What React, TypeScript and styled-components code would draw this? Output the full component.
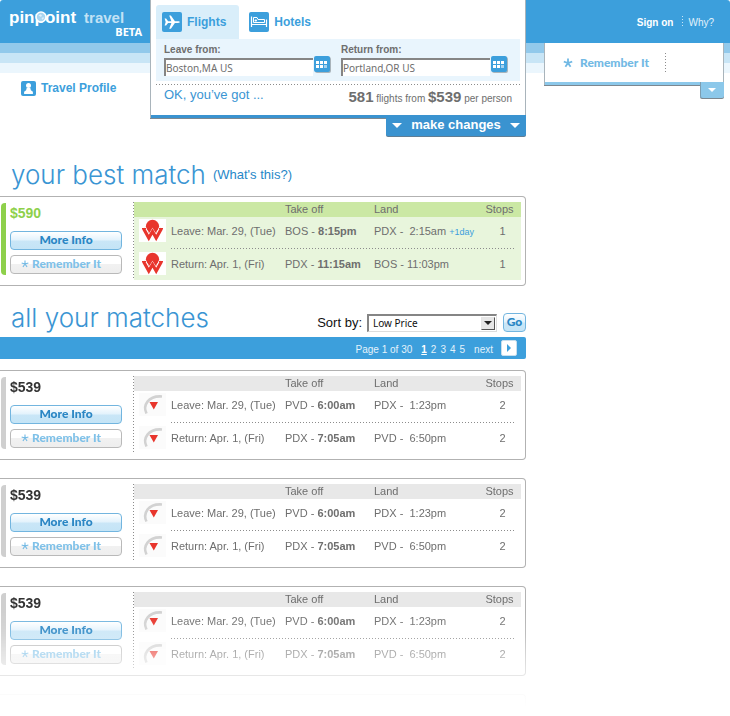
import React from "react";
import styled, { createGlobalStyle } from "styled-components";

const BLUE = "#3c9fdc";
const TEXT = "#6e6e6e";
const SANS = '"Liberation Sans", Arial, sans-serif';
const HUMANIST = 'Lato, "Noto Sans", sans-serif';

const GlobalStyle = createGlobalStyle`
  *, *::before, *::after { box-sizing: border-box; }
  body {
    margin: 0;
    background: #fff;
    color: ${TEXT};
    font: 11px/14px ${SANS};
  }
  button, input, select { font: inherit; color: inherit; margin: 0; }
  button { cursor: pointer; }
  a { text-decoration: none; }
`;

const Columns = styled.div`
  display: grid;
  grid-template-columns: minmax(0, 1fr) 204px;
`;

const Header = styled.header`
  display: grid;
  grid-template-columns: 150px minmax(0, 1fr) 204px;
  align-items: start;
  border-radius: 3px 3px 0 0;
  background: linear-gradient(
    ${BLUE} 0 43px, #92c9eb 43px 53px, #c8e5f6 53px 63px, #ebf6fd 63px 73px, transparent 73px
  );
`;

const Dots = styled.div<{ $vertical?: boolean }>`
  flex: none;
  width: ${(p) => (p.$vertical ? "1px" : "auto")};
  height: ${(p) => (p.$vertical ? "auto" : "1px")};
  background: repeating-linear-gradient(
    ${(p) => (p.$vertical ? "180deg" : "90deg")}, #8c8c8c 0 1px, transparent 1px 3px
  );
`;

/* ---------- brand ---------- */
const Brand = styled.div`
  display: flex;
  flex-direction: column;
`;
const Logo = styled.a`
  display: flex;
  align-items: baseline;
  gap: 8px;
  padding: 9px 0 0 9px;
  color: #fff;
  font-size: 17px;
  line-height: 18px;
  font-weight: 700;
`;
const BubbleLetter = styled.span`
  position: relative;
  svg { position: absolute; left: 0; top: 3px; }
`;
const LogoSub = styled.span`
  color: #c2e2f5;
  font-size: 15px;
`;
const Beta = styled.span`
  align-self: flex-end;
  padding-right: 8px;
  color: #fff;
  font: 700 11px/10px "Noto Sans", sans-serif;
`;
const ProfileLink = styled.a`
  display: flex;
  align-items: center;
  gap: 5px;
  margin: 43px 0 0 21px;
  color: ${BLUE};
  font-size: 12px;
  line-height: 16px;
  font-weight: 700;
`;

/* ---------- search panel ---------- */
const SearchColumn = styled.div`
  display: flex;
  flex-direction: column;
`;
const SearchPanel = styled.form`
  padding: 5px 5px 3px;
  background: #fff;
  border: solid #a9b4bb;
  border-width: 0 1px;
  box-shadow: inset 0 -3px 0 #3a93d0, 0 1px 0 #7d8890;
`;
const Tabs = styled.nav`
  display: flex;
`;
const Tab = styled.button<{ $active?: boolean }>`
  display: flex;
  align-items: center;
  gap: 5px;
  height: 34px;
  padding: 0 13px 0 6px;
  border: 0;
  border-radius: 3px 3px 0 0;
  background: ${(p) => (p.$active ? "#d9eefa" : "transparent")};
  color: ${BLUE};
  font-size: 12px;
  font-weight: 700;
  margin-right: 4px;
`;
const Fields = styled.div`
  display: flex;
  gap: 11px;
  height: 42px;
  padding: 4px 13px 0 8px;
  margin-bottom: 3px;
  background: #e9f5fd;
`;
const Field = styled.div`
  flex: 1;
  min-width: 0;
  label {
    display: block;
    font-size: 10px;
    line-height: 13px;
    font-weight: 700;
  }
`;
const FieldRow = styled.div`
  display: flex;
  gap: 1px;
`;
const TextInput = styled.input`
  flex: 1;
  min-width: 0;
  height: 18px;
  margin-top: 2px;
  padding: 0;
  border: solid #858585;
  border-width: 2px 0 0 2px;
  background: #fff;
  font: 10px/14px "Noto Sans", sans-serif;
`;
const CalendarButton = styled.button`
  display: block;
  width: 16px;
  height: 16px;
  padding: 0;
  border: 0;
  border-radius: 2px;
  background: ${BLUE};
  box-shadow: 1px 1px 0 #a9b4bb;
  svg { display: block; }
`;
const Summary = styled.div`
  display: flex;
  justify-content: space-between;
  height: 30px;
  padding: 2px 8px 0;
`;
const Greeting = styled.span`
  color: #3a95d3;
  font-size: 13px;
  line-height: 16px;
`;
const Totals = styled.span`
  font-size: 10px;
  line-height: 20px;
  strong { font-size: 15px; }
`;
const ChangesButton = styled.button`
  display: flex;
  align-items: center;
  justify-content: space-between;
  align-self: flex-end;
  width: 140px;
  height: 21px;
  margin-top: -3px;
  margin-bottom: 1px;
  padding: 0 6px 1px;
  border: 0;
  border-radius: 0 0 2px 2px;
  background: #3a93d0;
  box-shadow: 0 1px 0 #5f7e95;
  color: #fff;
  font-size: 13px;
  line-height: 16px;
  font-weight: 700;
`;

/* ---------- account ---------- */
const Account = styled.div`
  display: flex;
  flex-direction: column;
`;
const AccountLinks = styled.nav`
  display: flex;
  justify-content: flex-end;
  gap: 5px;
  height: 43px;
  padding: 16px 16px 0 0;
  font-size: 10px;
  a { color: #fff; }
  a:first-child { font-weight: 700; margin-right: 4px; }
  a:last-child { color: #e3f2fb; }
`;
const LightDots = styled.span`
  width: 1px;
  height: 11px;
  background: repeating-linear-gradient(180deg, #c8e5f6 0 1px, transparent 1px 3px);
`;
const Tray = styled.div`
  display: flex;
  height: 42px;
  margin: 0 6px 0 18px;
  padding: 10px 0 0 18px;
  border: 1px solid #a9b4bb;
  border-width: 0 1px;
  background: #fff;
  box-shadow: inset 0 -3px 0 #8cc8ea, 0 1px 0 #7d8890;
`;
const TrayLink = styled.a`
  display: flex;
  align-items: center;
  gap: 7px;
  height: 20px;
  margin-right: 16px;
  color: #72b9e4;
  font: 900 12px/14px ${HUMANIST};
`;
const TrayDots = styled(Dots)`
  height: 19px;
`;
const TrayButton = styled.button`
  display: flex;
  align-items: center;
  justify-content: center;
  align-self: flex-end;
  width: 24px;
  height: 16px;
  margin: -3px 6px 0 0;
  padding: 0;
  border: 0;
  border-radius: 0 0 2px 2px;
  background: #8cc8ea;
  box-shadow: inset 1px 0 0 #7d9db0, 0 1px 0 #7d8890;
`;

/* ---------- results ---------- */
const SectionHead = styled.div<{ $top: number; $bottom: number }>`
  display: flex;
  align-items: center;
  gap: 7px;
  padding: ${(p) => p.$top}px 0 ${(p) => p.$bottom}px 11px;
`;
const Title = styled.h1`
  margin: 0;
  color: #3a95d3;
  font: 300 26px/32px Inter, ${SANS};
`;
const HelpLink = styled.a`
  color: #2787c8;
  font-size: 13px;
`;
const SortForm = styled.form`
  display: flex;
  align-items: center;
  margin-left: auto;
  padding-top: 9px;
  color: #111;
  label { font-size: 13px; margin-right: 5px; }
`;
const SelectBox = styled.div`
  position: relative;
  width: 130px;
  height: 18px;
  margin-right: 6px;
  select {
    appearance: none;
    width: 100%;
    height: 18px;
    padding: 0 0 0 4px;
    border: solid #858585;
    border-width: 2px 1px 1px 2px;
    border-color: #858585 #ddd #ddd #858585;
    border-radius: 0;
    background: #fff;
    font: 10px/14px "Noto Sans", sans-serif;
  }
`;
const SelectArrow = styled.span`
  position: absolute;
  right: 2px;
  top: 3px;
  display: grid;
  place-items: center;
  width: 14px;
  height: 13px;
  border: 1px solid #e4e4e4;
  border-color: #e4e4e4 #555 #555 #e4e4e4;
  background: #e6e6e6;
  pointer-events: none;
`;
const PillButton = styled.button<{ $muted?: boolean }>`
  display: flex;
  align-items: center;
  justify-content: center;
  gap: 3px;
  width: 100%;
  height: 19px;
  padding: ${(p) => (p.$muted ? "0 10px 1px 0" : "0 0 1px")};
  border: 1px solid ${(p) => (p.$muted ? "#b9b9b9" : "#72b5df")};
  border-radius: 4px;
  background: ${(p) =>
    p.$muted
      ? "linear-gradient(#fff 0 45%, #f1f1f1 50%, #eee)"
      : "linear-gradient(#fff, #e4f3fc 45%, #c9e6f7 55%, #c4e4f6)"};
  color: ${(p) => (p.$muted ? "#7fc1e8" : "#2a86c4")};
  font: 900 12px/16px ${HUMANIST};
`;
const GoButton = styled(PillButton)`
  width: 23px;
`;
const Pager = styled.nav`
  display: flex;
  align-items: flex-end;
  justify-content: flex-end;
  height: 22px;
  padding: 0 9px 3px 0;
  border-radius: 0 2px 2px 0;
  background: ${BLUE};
  color: #e3f2fb;
  font-size: 10px;
  line-height: 12px;
  a { color: inherit; }
  a[aria-current] { color: #fff; font-weight: 700; text-decoration: underline; }
`;
const Pages = styled.span`
  display: flex;
  gap: 4px;
  margin: 0 9px;
`;
const NextButton = styled.button`
  display: grid;
  place-items: center;
  width: 16px;
  height: 16px;
  margin: 0 0 0 8px;
  padding: 0;
  border: 1px solid #c8dfee;
  border-radius: 2px;
  background: #fff;
`;
const Card = styled.article`
  display: grid;
  grid-template-columns: 133px 1px minmax(0, 1fr);
  padding: 5px 4px 5px 0;
  border: 1px solid #b2b2b2;
  border-left: 0;
  border-radius: 0 4px 4px 0;
`;
const Offer = styled.div`
  display: flex;
  gap: 4px;
  padding: 1px 11px 0 1px;
`;
const Stripe = styled.span<{ $best?: boolean }>`
  flex: none;
  width: 5px;
  height: 72px;
  border-radius: 4px 0 0 4px;
  background: ${(p) => (p.$best ? "#8ed04b" : "#cfcfcf")};
`;
const OfferBody = styled.div`
  flex: 1;
  display: flex;
  flex-direction: column;
  gap: 5px;
`;
const Price = styled.strong<{ $best?: boolean }>`
  padding: 2px 0 5px;
  color: ${(p) => (p.$best ? "#8ed04b" : "#333")};
  font-size: 14px;
  line-height: 16px;
`;
const Itinerary = styled.table<{ $best?: boolean }>`
  width: 100%;
  table-layout: fixed;
  border-collapse: collapse;
  background: ${(p) => (p.$best ? "#e8f5dc" : "#fff")};
  th, td { padding: 0; text-align: left; font-weight: 400; white-space: nowrap; }
  thead tr { height: 15px; background: ${(p) => (p.$best ? "#cbe8a4" : "#e8e8e8")}; }
  th { line-height: 15px; }
  th:last-child, td.stops { text-align: center; }
  tr.leg { height: 29px; }
  tr.leg:last-child { height: 30px; }
  tr.leg td { padding-top: 7px; vertical-align: top; }
  tr.leg td.airline { padding: 2px 0 0 5px; }
  tr.leg td.stops { padding-left: 6px; }
  tr.divider { height: 4px; }
  tr.divider td { vertical-align: top; }
  td > svg { display: block; }
  small { color: ${BLUE}; font-size: 9px; line-height: 1; }
`;
const LegDots = styled(Dots)`
  margin: 2px 6px 0 37px;
`;
const CardList = styled.div`
  display: flex;
  flex-direction: column;
  gap: 18px;
  margin-top: 11px;
  mask-image: linear-gradient(
    to top, transparent 0, rgba(0, 0, 0, 0.05) 14px, rgba(0, 0, 0, 0.3) 32px,
    rgba(0, 0, 0, 0.55) 54px, rgba(0, 0, 0, 0.85) 74px, #000 96px
  );
`;
const NextCardEdge = styled.div`
  height: 14px;
  border: 1px solid #b2b2b2;
  border-width: 1px 1px 0 0;
  border-radius: 0 4px 0 0;
`;

/* ---------- drawings ---------- */
const Caret = ({ color = "#fff", w = 10, h = 5 }: { color?: string; w?: number; h?: number }) => (
  <svg width={w} height={h} viewBox="0 0 10 5" preserveAspectRatio="none" aria-hidden>
    <path d="M0 0h10L5 5z" fill={color} />
  </svg>
);

const PlaneIcon = () => (
  <svg width="20" height="20" viewBox="0 0 20 20" aria-hidden>
    <rect width="20" height="20" rx="2" fill={BLUE} />
    <path
      d="M2.6 6.6h1.5l2 2.6h3.3L7.2 3.4h1.700l4 5.800h3.200c1 0 1.700.4 1.700.9s-.7.9-1.700.9h-3.200l-4 5.700H7.200L9.400 11H6.100l-2 2.600H2.600L3.700 10z"
      fill="#fff"
    />
  </svg>
);

const BedIcon = () => (
  <svg width="20" height="20" viewBox="0 0 20 20" aria-hidden>
    <rect width="20" height="20" rx="2" fill={BLUE} />
    <path d="M2.5 4.500v10.500M17.500 7.500v7.500M2.500 12.500h15" stroke="#fff" strokeWidth="1.200" fill="none" />
    <path d="M4.500 10.500v-5h3.500l1 2h6.500v3z" fill="none" stroke="#fff" />
    <rect x="5.500" y="7.500" width="2.500" height="2" rx="1" fill="#fff" />
  </svg>
);

const ProfileIcon = () => (
  <svg width="15" height="15" viewBox="0 0 15 15" aria-hidden>
    <rect width="15" height="15" rx="2" fill={BLUE} />
    <circle cx="7.500" cy="4.600" r="2.500" fill="#fff" />
    <path d="M5.700 7h3.600l.6 2.200 2 1.500V13H3.100v-2.300l2-1.500z" fill="#fff" />
  </svg>
);

const CalendarIcon = () => (
  <svg width="16" height="16" viewBox="0 0 16 16" aria-hidden>
    <path d="M2 5h3v3H2zM6 5h3v3H6zM10 5h3v3h-3zM2 9h3v3H2zM6 9h3v3H6z" fill="#fff" />
    <path d="M10 9h3v3h-3z" fill="#a5d2ef" />
  </svg>
);

const Star = ({ size = 10, weight = 1.8 }: { size?: number; weight?: number }) => (
  <svg width={size} height={size} viewBox="0 0 10 10" aria-hidden>
    <path
      d="M5 5V.6M5 5l4.200-1.300M5 5l2.600 3.700M5 5L2.400 8.700M5 5L.8 3.700"
      stroke="#72b9e4"
      strokeWidth={weight}
    />
  </svg>
);

const Bubble = () => (
  <svg width="12" height="12" viewBox="0 0 12 12" aria-hidden>
    <circle cx="6" cy="6" r="5" fill="#a9d5f0" stroke="#fff" strokeWidth="1.600" />
    <path d="M3.500 4.500l2-1.200 1.500 1-1 1.700zM6.500 7l2-1 .3 1.500-1.500 1.300z" fill="#dceffa" />
  </svg>
);

const WingLogo = () => (
  <svg width="27" height="23" viewBox="0 0 27 23" role="img" aria-label="Airline">
    <rect width="27" height="23" fill="#fff" />
    <circle cx="13.500" cy="7.300" r="6.600" fill="#e8352c" />
    <path d="M4.500 9.500l5.300 9.500 3.700-6.500 3.700 6.500 5.300-9.500" fill="none" stroke="#fff" strokeWidth="5.200" />
    <path d="M4.500 9.500l5.300 9.500 3.700-6.500 3.700 6.500 5.300-9.500" fill="none" stroke="#e8352c" strokeWidth="3.200" />
    <path d="M3 9.500h4M20 9.500h4" stroke="#e8352c" strokeWidth="1.200" />
    <path d="M9.800 13.500l3.700-6.200 3.700 6.200" fill="none" stroke="#e8352c" strokeWidth="1.400" />
  </svg>
);

const ArcLogo = () => (
  <svg width="27" height="23" viewBox="0 0 27 23" role="img" aria-label="Airline">
    <rect width="27" height="23" fill="#fbfbfb" />
    <path d="M7.500 20.500C3.500 12.500 9 2.500 23 3.500" fill="none" stroke="#d2d2d2" strokeWidth="2.600" />
    <path d="M10.500 9h8.500l-4.200 7.500z" fill="#e8352c" />
  </svg>
);

/* ---------- data ---------- */
type Leg = { when: string; from: string; off: string; to: string; land: string; plus?: string; stops: number };
type Flight = { price: string; best?: boolean; legs: Leg[] };

const best: Flight = {
  price: "$590",
  best: true,
  legs: [
    { when: "Leave: Mar. 29, (Tue)", from: "BOS", off: "8:15pm", to: "PDX", land: "\u00a02:15am", plus: "+1day", stops: 1 },
    { when: "Return: Apr. 1, (Fri)", from: "PDX", off: "11:15am", to: "BOS", land: "11:03pm", stops: 1 },
  ],
};
const match: Flight = {
  price: "$539",
  legs: [
    { when: "Leave: Mar. 29, (Tue)", from: "PVD", off: "6:00am", to: "PDX", land: "\u00a01:23pm", stops: 2 },
    { when: "Return: Apr. 1, (Fri)", from: "PDX", off: "7:05am", to: "PVD", land: "\u00a06:50pm", stops: 2 },
  ],
};
const matches = [match, match, match];

const FlightCard = ({ price, best: isBest, legs }: Flight) => (
  <Card>
    <Offer>
      <Stripe $best={isBest} />
      <OfferBody>
        <Price $best={isBest}>{price}</Price>
        <PillButton type="button">More Info</PillButton>
        <PillButton type="button" $muted><Star size={8} weight={1.4} />Remember It</PillButton>
      </OfferBody>
    </Offer>
    <Dots $vertical />
    <Itinerary $best={isBest}>
      <colgroup>
        <col width="37" />
        <col width="114" />
        <col width="89" />
        <col />
        <col width="43" />
      </colgroup>
      <thead>
        <tr>
          <th /><th /><th>Take off</th><th>Land</th><th>Stops</th>
        </tr>
      </thead>
      <tbody>
        {legs.map((leg, i) => (
          <React.Fragment key={leg.when}>
            {i > 0 && (
              <tr className="divider"><td colSpan={5}><LegDots /></td></tr>
            )}
            <tr className="leg">
              <td className="airline">{isBest ? <WingLogo /> : <ArcLogo />}</td>
              <td>{leg.when}</td>
              <td>{leg.from} - <b>{leg.off}</b></td>
              <td>{leg.to} - {leg.land} {leg.plus && <small>{leg.plus}</small>}</td>
              <td className="stops">{leg.stops}</td>
            </tr>
          </React.Fragment>
        ))}
      </tbody>
    </Itinerary>
  </Card>
);

const CityField = ({ id, label, value }: { id: string; label: string; value: string }) => (
  <Field>
    <label htmlFor={id}>{label}</label>
    <FieldRow>
      <TextInput id={id} defaultValue={value} />
      <CalendarButton type="button" aria-label={`${label} calendar`}><CalendarIcon /></CalendarButton>
    </FieldRow>
  </Field>
);

export default function App() {
  return (
    <>
      <GlobalStyle />
      <Header>
        <Brand>
          <Logo href="#">
            <span>pin<BubbleLetter>p<Bubble /></BubbleLetter>oint</span>
            <LogoSub>travel</LogoSub>
          </Logo>
          <Beta>BETA</Beta>
          <ProfileLink href="#"><ProfileIcon />Travel Profile</ProfileLink>
        </Brand>

        <SearchColumn>
          <SearchPanel>
            <Tabs>
              <Tab type="button" $active><PlaneIcon />Flights</Tab>
              <Tab type="button"><BedIcon />Hotels</Tab>
            </Tabs>
            <Fields>
              <CityField id="leave" label="Leave from:" value="Boston,MA US" />
              <CityField id="return" label="Return from:" value="Portland,OR US" />
            </Fields>
            <Dots />
            <Summary>
              <Greeting>OK, you’ve got ...</Greeting>
              <Totals>
                <strong>581</strong> flights from <strong>$539</strong> per person
              </Totals>
            </Summary>
          </SearchPanel>
          <ChangesButton type="button"><Caret />make changes<Caret /></ChangesButton>
        </SearchColumn>

        <Account>
          <AccountLinks>
            <a href="#">Sign on</a>
            <LightDots />
            <a href="#">Why?</a>
          </AccountLinks>
          <Tray>
            <TrayLink href="#"><Star />Remember It</TrayLink>
            <TrayDots $vertical />
          </Tray>
          <TrayButton type="button" aria-label="Open saved flights"><Caret w={8} h={4} /></TrayButton>
        </Account>
      </Header>

      <Columns>
        <main>
          <SectionHead $top={22} $bottom={5}>
            <Title>your best match</Title>
            <HelpLink href="#">(What's this?)</HelpLink>
          </SectionHead>
          <FlightCard {...best} />

          <SectionHead $top={16} $bottom={3}>
            <Title as="h2">all your matches</Title>
            <SortForm>
              <label htmlFor="sort">Sort by:</label>
              <SelectBox>
                <select id="sort" defaultValue="Low Price">
                  <option>Low Price</option>
                </select>
                <SelectArrow><Caret color="#222" w={8} h={4} /></SelectArrow>
              </SelectBox>
              <GoButton type="button">Go</GoButton>
            </SortForm>
          </SectionHead>
          <Pager>
            <span>Page 1 of 30</span>
            <Pages>
              <a href="#" aria-current="page">1</a>
              <a href="#">2</a>
              <a href="#">3</a>
              <a href="#">4</a>
              <a href="#">5</a>
            </Pages>
            <a href="#">next</a>
            <NextButton type="button" aria-label="Next page">
              <svg width="6" height="8" viewBox="0 0 6 8" aria-hidden><path d="M1 0l4 4-4 4z" fill={BLUE} /></svg>
            </NextButton>
          </Pager>
          <CardList>
            {matches.map((m, i) => <FlightCard key={i} {...m} />)}
            <NextCardEdge />
          </CardList>
        </main>
      </Columns>
    </>
  );
}
